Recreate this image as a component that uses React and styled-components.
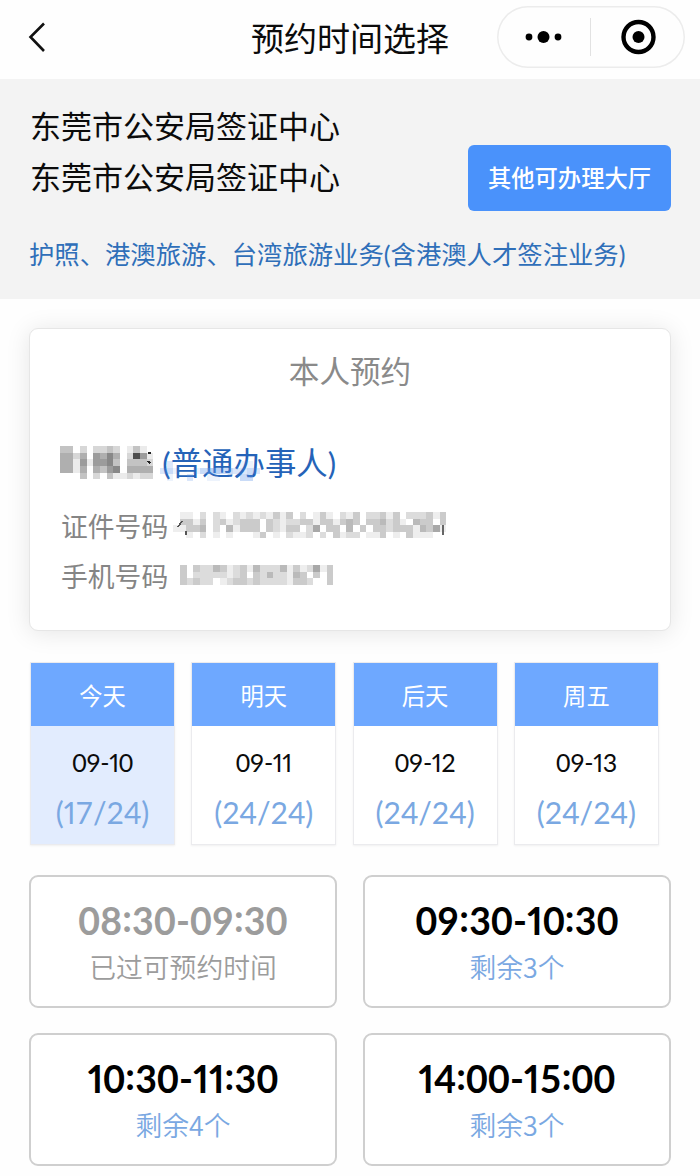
import React from "react";
import styled, { createGlobalStyle } from "styled-components";

const DAYS = [
  { label: "今天", date: "09-10", quota: "(17/24)", active: true },
  { label: "明天", date: "09-11", quota: "(24/24)" },
  { label: "后天", date: "09-12", quota: "(24/24)" },
  { label: "周五", date: "09-13", quota: "(24/24)" },
];

const SLOTS = [
  { time: "08:30-09:30", note: "已过可预约时间", past: true },
  { time: "09:30-10:30", note: "剩余3个" },
  { time: "10:30-11:30", note: "剩余4个" },
  { time: "14:00-15:00", note: "剩余3个" },
];

// one digit per mosaic cell, 0 is blank and 9 is the darkest
const NAME_MASK = [
  "33020223201310",
  "44240546402951",
  "44151556303332",
  "44140435604444",
  "00030203112122",
];
const ID_MASK = [
  "01102021021212131302013102130223130222313",
  "03313023123330321223313313430334231043303",
  "11334020413330321330250330403033233314351",
  "00102010100013010211202031220113010311100",
];
const PHONE_MASK = [
  "30322431231422241312513",
  "30222221230324221430303",
  "32322012332322221332003",
];
const ROLE_MASK = ["020000000000110", "231001344332232", "010020011000330"];

const CELL = 20 / 3;

function Mosaic({ rows, color = "#000", strength = 0.068, children }) {
  return (
    <MosaicSvg width={rows[0].length * CELL} height={rows.length * CELL}>
      {rows.map((row, y) =>
        row
          .split("")
          .map((level, x) => (
            <rect
              key={`${x}-${y}`}
              x={x * CELL}
              y={y * CELL}
              width={CELL}
              height={CELL}
              fill={color}
              fillOpacity={level * strength}
            />
          ))
      )}
      {children}
    </MosaicSvg>
  );
}

// even-width figures, except for a narrow 1 and a raised colon
function Figures({ children }) {
  return children.split(/([1:])/).map((part, i) => {
    if (part === "1") return <One key={i}>1</One>;
    if (part === ":") return <Colon key={i}>:</Colon>;
    return part;
  });
}

export default function App() {
  return (
    <Page>
      <GlobalStyle />
      <NavBar>
        <BackIcon width="20" height="32" viewBox="0 0 20 32">
          <path d="M17 2.5 L3.5 16 L17 30" />
        </BackIcon>
        <Title>预约时间选择</Title>
        <Capsule>
          <svg width="188" height="62" viewBox="0 0 188 62">
            <circle cx="32" cy="31" r="3.4" />
            <circle cx="46.5" cy="31" r="6" />
            <circle cx="61" cy="31" r="3.4" />
            <path d="M93.5 12 V50" stroke="#e2e2e2" />
            <circle
              cx="141.5"
              cy="31"
              r="15"
              fill="none"
              stroke="#000"
              strokeWidth="4.4"
            />
            <circle cx="141.5" cy="31" r="6" />
          </svg>
        </Capsule>
      </NavBar>

      <Center>
        <CenterRow>
          <div>
            <CenterName>东莞市公安局签证中心</CenterName>
            <CenterName>东莞市公安局签证中心</CenterName>
          </div>
          <HallButton>其他可办理大厅</HallButton>
        </CenterRow>
        <Services>护照、港澳旅游、台湾旅游业务(含港澳人才签注业务)</Services>
      </Center>

      <Card>
        <CardTitle>本人预约</CardTitle>
        <Person>
          <Mosaic rows={NAME_MASK} strength={0.078}>
            <path d="M87.5 7 h3.5 M87.5 15 l3 2.5" stroke="#222" strokeWidth="2" />
          </Mosaic>
          <Role>
            (普通办事人)
            <RoleMask>
              <Mosaic rows={ROLE_MASK} color="#5b93e6" strength={0.11} />
            </RoleMask>
          </Role>
        </Person>
        <Field>
          证件号码
          <Mosaic rows={ID_MASK}>
            <path d="M9 9 l-4 6 M13 19 v4" stroke="#555" strokeWidth="1.6" />
            <path d="M270 13 v10" stroke="#666" strokeWidth="2.4" />
          </Mosaic>
        </Field>
        <Field $gap={12}>
          手机号码
          <Mosaic rows={PHONE_MASK} />
        </Field>
      </Card>

      <Days>
        {DAYS.map((day) => (
          <Day key={day.date} $active={day.active}>
            <DayHead>{day.label}</DayHead>
            <DayDate>
              <Figures>{day.date}</Figures>
            </DayDate>
            <DayQuota>
              <Figures>{day.quota}</Figures>
            </DayQuota>
          </Day>
        ))}
      </Days>

      <Slots>
        {SLOTS.map((slot) => (
          <Slot key={slot.time}>
            <SlotTime $past={slot.past}>
              <Figures>{slot.time}</Figures>
            </SlotTime>
            <SlotNote $past={slot.past}>{slot.note}</SlotNote>
          </Slot>
        ))}
      </Slots>
    </Page>
  );
}

const GlobalStyle = createGlobalStyle`
  * {
    box-sizing: border-box;
  }

  body {
    margin: 0;
    background: #fefefe;
  }
`;

const Page = styled.div`
  width: 700px;
  height: 1176px;
  overflow: hidden;
  background: #fefefe;
  color: #0b0b0b;
  font-family: Lato, "Noto Sans CJK SC", sans-serif;
`;

const NavBar = styled.header`
  display: grid;
  grid-template-columns: 203px 1fr 203px;
  align-items: center;
  height: 79px;
  padding-bottom: 5px;
`;

const BackIcon = styled.svg`
  margin-left: 27px;
  fill: none;
  stroke: #111;
  stroke-width: 2.6;
`;

const Title = styled.h1`
  margin: 2px 0 0;
  font-size: 33px;
  font-weight: 400;
  line-height: 44px;
  text-align: center;
`;

const Capsule = styled.div`
  width: 188px;
  height: 62px;
  border-radius: 31px;
  box-shadow: inset 0 0 0 1.5px #ececec;
`;

const Center = styled.section`
  height: 220px;
  padding: 22px 29px 0 30px;
  background: #f3f3f3;
`;

const CenterRow = styled.div`
  display: flex;
  justify-content: space-between;
  align-items: flex-end;
`;

const CenterName = styled.div`
  font-size: 31px;
  line-height: 51px;
`;

const HallButton = styled.button`
  width: 203px;
  height: 66px;
  margin-bottom: -8px;
  padding: 0 0 2px;
  border: none;
  border-radius: 6px;
  background: #4a92fb;
  color: #fff;
  font-family: inherit;
  font-size: 23.3px;
  font-weight: 500;
`;

const Services = styled.div`
  margin: 32px 0 0 -1px;
  color: #2f6fb9;
  font-size: 25.35px;
  line-height: 38px;
  white-space: nowrap;
`;

const Card = styled.section`
  height: 303px;
  margin: 29px 29px 0;
  padding: 23px 31px 0;
  border: 1.5px solid #e6e6e6;
  border-radius: 9px;
  background: #fff;
  box-shadow: 0 2px 24px rgba(0, 0, 0, 0.1);
`;

const CardTitle = styled.div`
  color: #8a8a8a;
  font-size: 30.6px;
  line-height: 40px;
  text-align: center;
`;

const Person = styled.div`
  display: flex;
  align-items: center;
  gap: 9px;
  height: 44px;
  margin: 49px 0 0 -1px;
`;

const Role = styled.span`
  position: relative;
  color: #2563b8;
  font-size: 31.4px;
  line-height: 44px;
`;

const RoleMask = styled.span`
  position: absolute;
  left: -2px;
  top: 20px;
`;

const Field = styled.div`
  display: flex;
  align-items: center;
  gap: ${(props) => props.$gap || 5}px;
  height: 50px;
  color: #858585;
  font-size: 26.8px;

  ${Person} + & {
    margin-top: 15px;
  }
`;

const MosaicSvg = styled.svg`
  display: block;
  flex: none;
  shape-rendering: crispEdges;
`;

const One = styled.span`
  font-feature-settings: "pnum";
`;

const Colon = styled.span`
  vertical-align: 0.08em;
  line-height: 1;
`;

const Days = styled.div`
  display: grid;
  grid-template-columns: repeat(4, 145px);
  column-gap: 16.3px;
  margin: 31px 0 0 30px;
`;

const Day = styled.div`
  height: 183px;
  border: 1.5px solid #ebebee;
  background: ${(props) => (props.$active ? "#e2ecfe" : "#fff")};
  box-shadow: 0 1px 2px rgba(0, 0, 0, 0.06);
  text-align: center;
`;

const DayHead = styled.div`
  height: 63px;
  background: #6ea8ff;
  color: #fff;
  font-size: 23.3px;
  line-height: 66px;
`;

const DayDate = styled.div`
  margin-top: 21px;
  font-size: 25px;
  letter-spacing: -0.4px;
  line-height: 31px;
`;

const DayQuota = styled.div`
  margin-top: 16px;
  color: #7aa8e2;
  font-size: 30px;
  line-height: 36px;
`;

const Slots = styled.div`
  display: grid;
  grid-template-columns: 308px 308px;
  gap: 25px 26px;
  margin: 30px 0 0 29px;
`;

const Slot = styled.div`
  height: 133px;
  padding-top: 21px;
  border: 2px solid #cfcfcf;
  border-radius: 9px;
  background: #fff;
  text-align: center;
`;

const SlotTime = styled.div`
  color: ${(props) => (props.$past ? "#9c9c9c" : "#000")};
  font-size: 37.5px;
  font-weight: 700;
  letter-spacing: 0.2px;
  line-height: 46px;
`;

const SlotNote = styled.div`
  margin-top: 3px;
  color: ${(props) => (props.$past ? "#9c9c9c" : "#7aa8e2")};
  font-family: "Noto Sans CJK SC", sans-serif;
  font-size: 26.8px;
  font-weight: 350;
  line-height: 40px;
`;
